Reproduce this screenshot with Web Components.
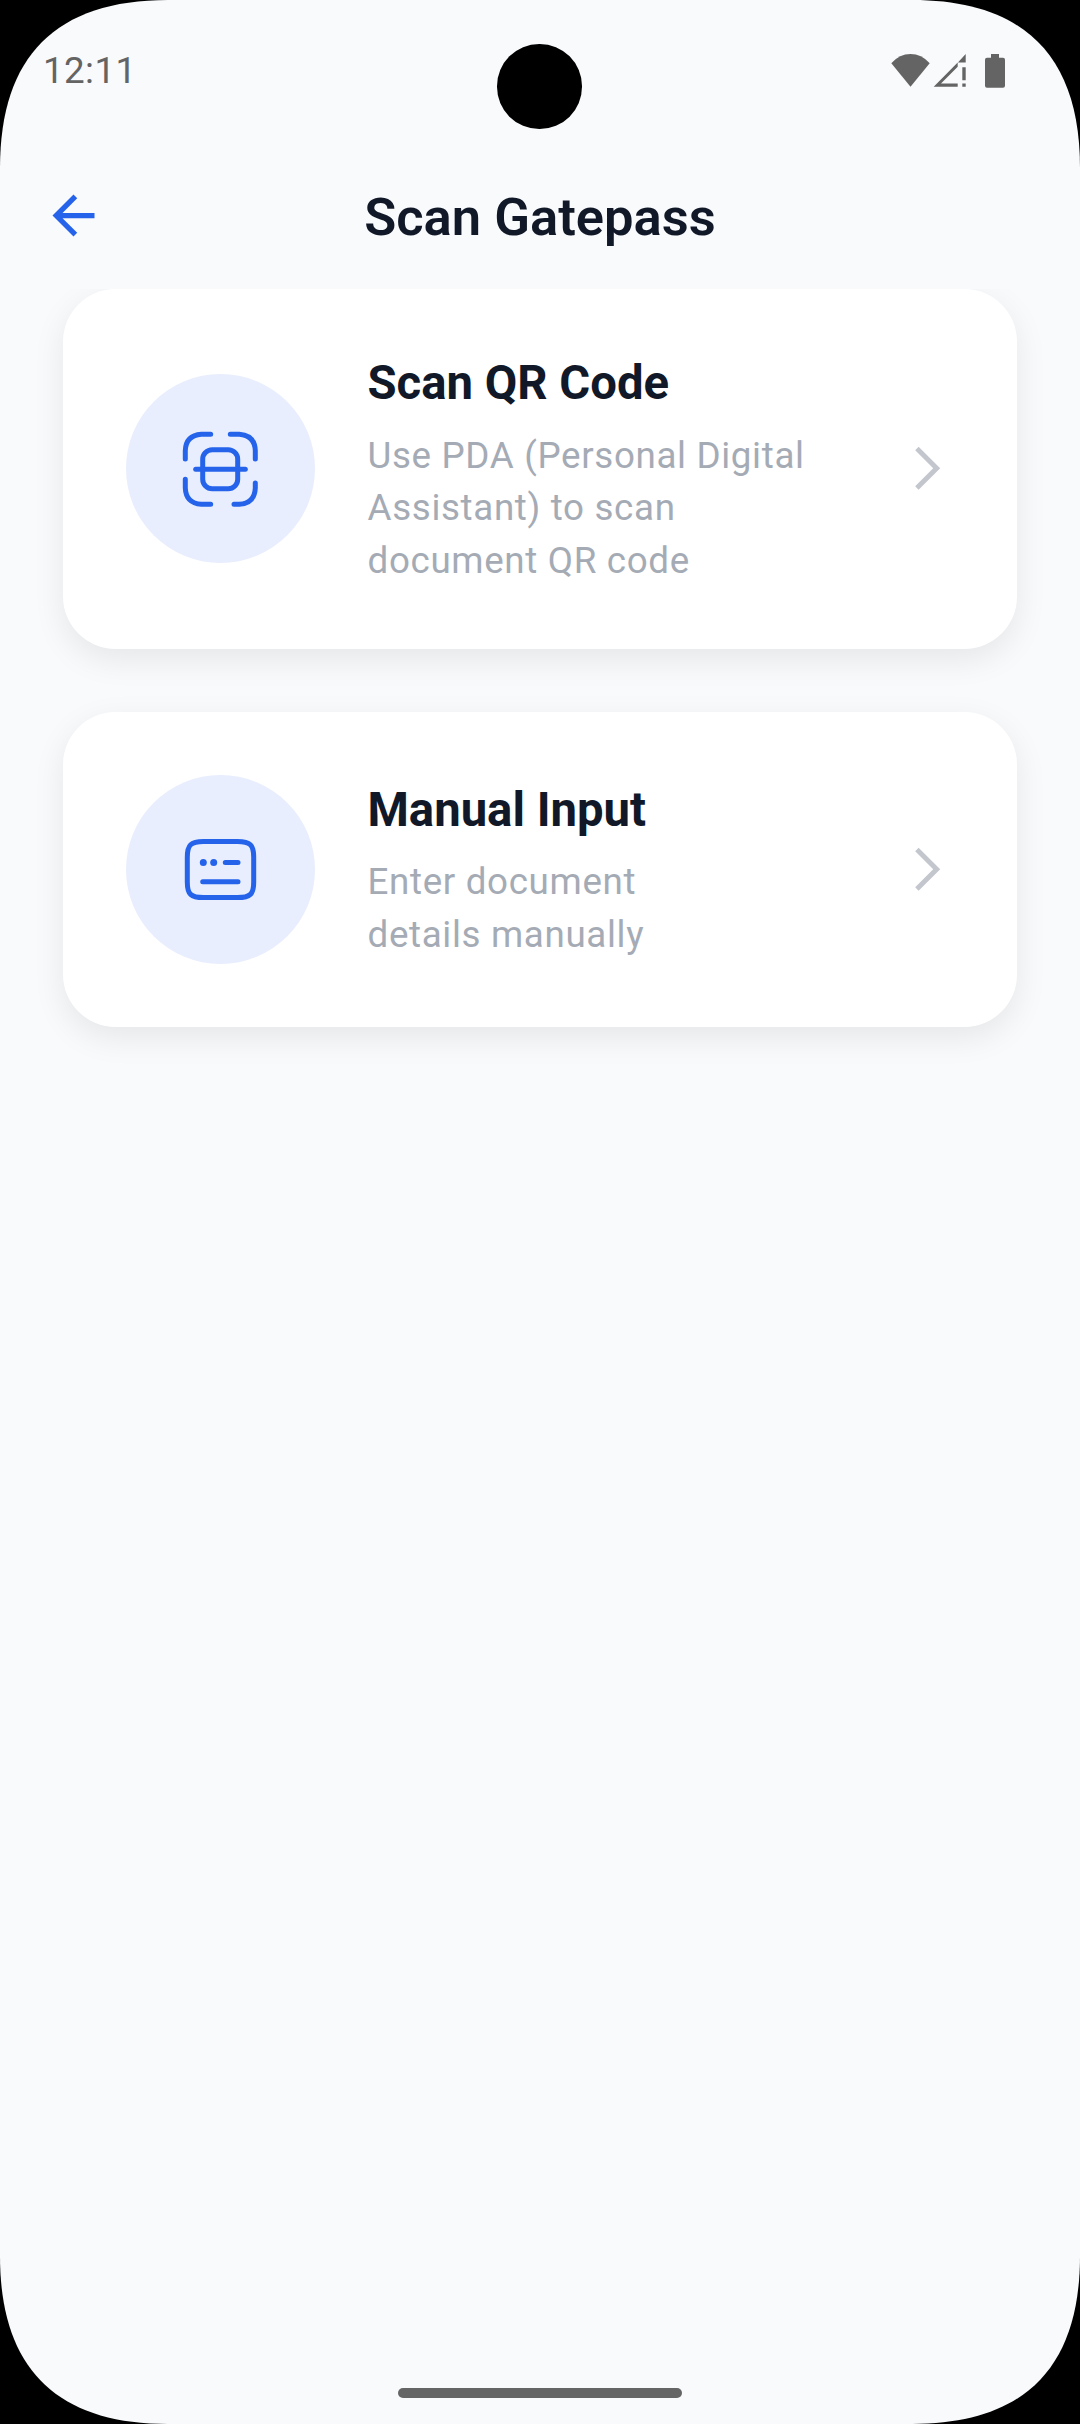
<!DOCTYPE html>
<html lang="en">
<head>
<meta charset="utf-8">
<title>Scan Gatepass</title>
<style>
html,body{margin:0;background:#000;font-family:Roboto,"Liberation Sans",sans-serif}
</style>
</head>
<body>
<phone-screen>
  <status-bar slot="status" time="12:11"></status-bar>
  <app-header slot="header">Scan Gatepass</app-header>
  <option-card>
    <qr-icon slot="icon"></qr-icon>
    <span slot="title">Scan QR Code</span>
    <span slot="text">Use PDA (Personal Digital<br>Assistant) to scan<br>document QR code</span>
  </option-card>
  <option-card>
    <form-icon slot="icon"></form-icon>
    <span slot="title">Manual Input</span>
    <span slot="text">Enter document<br>details manually</span>
  </option-card>
</phone-screen>
<script>
function define(name, html) {
  const template = document.createElement('template');
  template.innerHTML = html;
  customElements.define(name, class extends HTMLElement {
    constructor() {
      super();
      this.attachShadow({ mode: 'open' }).append(template.content.cloneNode(true));
    }
    connectedCallback() {
      const time = this.shadowRoot.querySelector('time');
      if (time) time.textContent = this.getAttribute('time');
    }
  });
}

define('phone-screen', `
<style>
:host{display:flex;flex-direction:column;position:relative;width:1080px;height:2424px;background:#f9fafc;
clip-path:path('M0 168C0 56 56 0 168 0H912C1024 0 1080 56 1080 168V2256C1080 2368 1024 2424 912 2424H168C56 2424 0 2368 0 2256Z')}
main{flex:1;min-height:0;overflow:hidden;display:flex;flex-direction:column;gap:63px;padding:0 63px}
.camera{position:absolute;left:497.2px;top:44px;width:84.5px;height:84.5px;border-radius:50%;background:#000}
footer{display:flex;justify-content:center;padding-bottom:26px}
footer i{width:284px;height:10px;border-radius:5px;background:#656565}
</style>
<slot name="status"></slot><slot name="header"></slot>
<main><slot></slot></main>
<footer><i></i></footer>
<div class="camera"></div>`);

define('status-bar', `
<style>
:host{display:flex;justify-content:space-between;align-items:flex-start;box-sizing:border-box;height:142px;padding:50px 68px 0 43px;color:#646464}
time{margin-top:-1px;font-size:36.75px;line-height:44px;letter-spacing:.4px}
svg{display:block;width:120px;height:40px;fill:currentColor}
</style>
<time></time>
<svg viewBox="892 50 120 40" overflow="visible">
<path d="M891.3 63.2Q899.5 54 910.5 54T929.7 63.2L910.5 86.7Z"/>
<path d="M933.7 86.7L957.7 62.5V66.7L941 83.6H957.7V86.7ZM965.7 54V62.5H957.9ZM962.3 67.3H965.7V80.3H962.3ZM962.3 83.5H965.7V86.7H962.3Z"/>
<path d="M991 54H999V57.7H1003Q1005 57.7 1005 59.7V85.7Q1005 87.7 1003 87.7H987Q985 87.7 985 85.7V59.7Q985 57.7 987 57.7H991Z"/>
</svg>`);

define('app-header', `
<style>
:host{display:grid;grid-template-columns:63px 1fr 63px;align-items:center;height:147px;padding:0 42px}
svg{display:block;width:63px;height:63px;fill:#2563eb}
h1{margin:3px 0 0;text-align:center;font-size:52.5px;line-height:62px;font-weight:600;color:#111827}
</style>
<svg viewBox="0 0 24 24"><path d="M20 11H7.83l5.59-5.59L12 4l-8 8 8 8 1.41-1.41L7.83 13H20v-2z"/></svg>
<h1><slot></slot></h1>`);

define('option-card', `
<style>
:host{display:flex;align-items:center;gap:52.5px;padding:63px;border-radius:52.5px;background:#fff;box-shadow:0 10.5px 31.5px rgba(0,0,0,.08)}
.badge{display:flex;align-items:center;justify-content:center;flex:none;width:189px;height:189px;border-radius:50%;background:#e8eefd;color:#2563eb}
.copy{flex:1;min-width:0}
h2{margin:0 0 14.6px;font-size:47.25px;line-height:63px;font-weight:700;color:#111827}
p{margin:0 0 -1.5px;font-size:36.75px;line-height:52.5px;letter-spacing:.656px;color:#a5abb5;white-space:nowrap}
.chevron{flex:none;display:block;width:53px;height:53px;fill:#c3c6cd}
</style>
<div class="badge"><slot name="icon"></slot></div>
<div class="copy"><h2><slot name="title"></slot></h2><p><slot name="text"></slot></p></div>
<svg class="chevron" viewBox="-.2 0 53 53"><path d="M14 8.2L17.4 4.8L39 26.25L17.4 47.7L14 44.3L32 26.25Z"/></svg>`);

const iconStyle = `<style>:host{display:block;width:83px;height:83px}
svg{display:block;width:83px;height:83px;fill:none;stroke:currentColor;stroke-width:5;stroke-linecap:round;stroke-linejoin:round}</style>`;

define('qr-icon', iconStyle + `
<svg viewBox="179 427 83 83">
<path d="M185.3 459V450.5Q185.9 435.3 201.3 434.2H210.7M230.3 434.2H239.3Q254.6 435.3 255.3 450.5V459M185.3 479.3V488Q185.9 503.2 201.3 504.3H210.7M255.3 483V488Q254.6 503.2 239.3 504.3H234"/>
<rect x="202.7" y="449.7" width="35" height="39" rx="9.5"/>
<path d="M195.7 469.3H245.3"/>
</svg>`);

define('form-icon', iconStyle + `
<svg viewBox="179 827.7 83 83">
<path d="M187.3 857C187.3 844.6 190.8 841.3 203.5 841.3H237.5C250.2 841.3 253.7 844.6 253.7 857V881.6C253.7 894 250.2 897.3 237.5 897.3H203.5C190.8 897.3 187.3 894 187.3 881.6Z"/>
<path d="M225.3 862.3H238M202.7 881.4H238"/>
<g fill="currentColor" stroke="none"><circle cx="203.3" cy="862.3" r="3.5"/><circle cx="213.7" cy="862.3" r="3.5"/></g>
</svg>`);
</script>
</body>
</html>
